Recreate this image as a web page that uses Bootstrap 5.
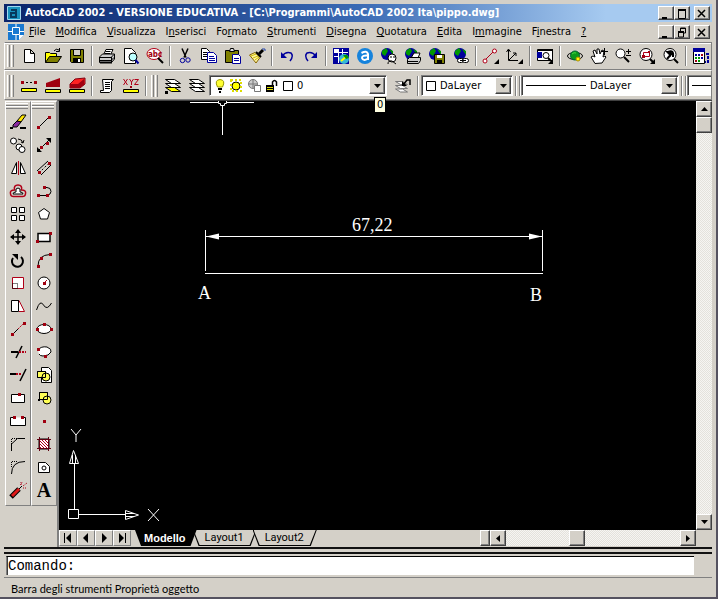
<!DOCTYPE html>
<html lang="it">
<head>
<meta charset="utf-8">
<meta name="viewport" content="width=device-width, initial-scale=1">
<title>AutoCAD 2002 - pippo.dwg</title>
<link href="https://cdn.jsdelivr.net/npm/bootstrap@5.3.0/dist/css/bootstrap.min.css" rel="stylesheet">
<style>
:root{--face:#d4d0c8;--shade:#808080;--ui:"DejaVu Sans Condensed","DejaVu Sans",sans-serif;--plain:Roboto,"Liberation Sans",Arial,sans-serif}
body{background:var(--face);font:11px/14px var(--ui);color:#000;padding:2px 4px 0 4px;border-right:2px solid #555260;border-bottom:2px solid #555260}
button,select,input{font:inherit;color:inherit;border-radius:0}
button{background:none;border:0;padding:0}
svg{display:block;flex:none}
.titlebar{height:18px;margin-top:2px;background:linear-gradient(90deg,#0a246a,#3a6ab4 50%,#a6caf0 85%);color:#fff;font-weight:700;padding:0 2px 0 3px}
.menubar{height:20px;padding:0 2px 0 4px}
.menu-items{gap:10px;padding-left:5px}
.menubar a{color:#000;text-decoration:none}
.raised{background:var(--face);border:1px solid;border-color:#fff #404040 #404040 #fff;box-shadow:inset -1px -1px 0 var(--shade)}
.winbtn{width:16px;height:14px}
.strip{border:1px solid;border-color:#fff var(--shade) var(--shade) #fff}
.strip-std{height:28px;border-top-color:var(--shade);box-shadow:inset 0 1px 0 #fff}
.strip-obj{height:30px;padding-top:1px}
.grip{width:8px;height:22px;margin:0 2px;flex:none;background:linear-gradient(90deg,#fff 0 1px,var(--face) 1px 2px,var(--shade) 2px 3px,var(--face) 3px 4px,#fff 4px 5px,var(--face) 5px 6px,var(--shade) 6px 7px,var(--face) 7px)}
.tool{width:24px;height:22px;flex:none;display:flex;align-items:center;justify-content:center}
.rule{width:2px;height:20px;margin:0 2px;flex:none;border-left:1px solid var(--shade);border-right:1px solid #fff}
.ic{width:18px;height:18px;fill:none;stroke:#000;stroke-width:1}
.fw{fill:#fff}.fk{fill:#000;stroke:none}.fy{fill:#ff0}.fo{fill:#808000}.fr{fill:#a00010;stroke:none}.fn{fill:#00009c;stroke:none}.fg{fill:#090;stroke:none}
.sr{stroke:#b00018}.sn{stroke:#00009c}.sg{stroke:#777}.b2{stroke-width:2}.no{stroke:none}
.combo{height:21px;background:#fff;border:1px solid;border-color:var(--shade) #fff #fff var(--shade);box-shadow:inset 1px 1px 0 #404040;padding:1px 1px 1px 4px}
.combo select{appearance:none;border:0;background:none;padding:0 0 0 4px;outline:0;min-width:0}
.arrowbtn{width:16px;height:17px;flex:none;display:flex;align-items:center;justify-content:center}
.combo-layer{width:178px;padding-left:1px}.combo-color{width:92px}.combo-ltype{width:158px}.combo-lw{width:27px}
.combo-layer,.combo-color,.combo-ltype,.combo-lw{flex-shrink:0}
.dock{width:53px;padding:1px 1px 0}
.palette{width:26px;border:1px solid;border-color:#fff var(--shade) var(--shade) #fff;padding-bottom:4px}
.palette .tool{height:23px;width:24px}
.mtext{font:700 20px/20px "Liberation Serif","Times New Roman",serif}
.vgrip{height:6px;width:22px;margin:1px 0;background:linear-gradient(#fff 0 1px,var(--face) 1px 2px,var(--shade) 2px 3px,#fff 3px 4px,var(--face) 4px 5px,var(--shade) 5px)}
.view{border-left:2px solid var(--shade);border-top:1px solid #404040}
.canvas{background:#000}
.canvas text{fill:#fff;font-family:"Liberation Serif","Times New Roman",serif;font-size:18px}
.track{background:#ecebe7 repeating-conic-gradient(#e4e2dc 0 25%,#f6f5f2 0 50%) 0 0/2px 2px}
.sbtn{width:16px;height:16px;flex:none;display:flex;align-items:center;justify-content:center}
.vbar{width:16px}
.tabrow{height:17px;font-family:var(--plain)}
.navbtn{width:18px;height:16px;border:1px solid;border-color:#fff var(--shade) var(--shade) #fff}
.sheet{height:16px;line-height:16px;padding:0 13px 0 12px;margin-left:-4px;position:relative;isolation:isolate}
.sheet,.sheet::before{clip-path:polygon(0 0,100% 0,calc(100% - 6px) 100%,6px 100%);background:#000}
.sheet::before{content:"";position:absolute;inset:0 1px 1px;z-index:-1;background:var(--face)}
.sheet.current{color:#fff;font-family:"Liberation Sans",Arial,sans-serif;font-weight:700;padding:0 11px 0 9px;margin-left:4px;z-index:1}
.sheet.current::before{background:#000}
.hbar{width:216px}
.hthumb{margin-left:29%}
.splitter{height:7px;border-top:2px solid #111;border-bottom:2px solid #111}
.prompt{height:19px;margin:2px 18px 2px 2px;border-left:1px solid var(--shade);border-top:1px solid #000;background:#fff;box-shadow:inset 1px 0 0 #404040;padding-left:1px}
.prompt label,.prompt input{font:14px/18px "Liberation Mono","Courier New",monospace}
.prompt input{border:0;outline:0;min-width:0;padding:0;background:none}
.status{height:20px;border-top:1px solid var(--shade);font:11px/20px Lato,"Liberation Sans",sans-serif;padding:1px 7px}
.tip{left:315px;top:-4px;background:#ffffe1;border:1px solid #000;padding:0 2px;line-height:14px}
</style>
<script src="https://cdn.jsdelivr.net/npm/bootstrap@5.3.0/dist/js/bootstrap.bundle.min.js"></script>
</head>
<body class="d-flex flex-column vh-100 overflow-hidden m-0">
<header class="titlebar d-flex align-items-center flex-shrink-0">
  <svg width="14" height="14" viewBox="0 0 14 14"><path fill="#1a93bd" stroke="#9fd8ee" d="M.5.5h13v13H.5z"/><path fill="none" stroke="#063a5c" stroke-width="2" d="M4 4h5v7H4V7h5"/></svg>
  <span class="ms-1 flex-grow-1 text-nowrap overflow-hidden">AutoCAD 2002 - VERSIONE EDUCATIVA - [C:\Programmi\AutoCAD 2002 Ita\pippo.dwg]</span>
  <button class="raised winbtn" aria-label="Riduci a icona"><svg width="12" height="11"><path d="M3 9h5v2H3z"/></svg></button>
  <button class="raised winbtn" aria-label="Ingrandisci"><svg width="13" height="11"><path fill="none" stroke="#000" d="M3.500 2v8.500h7V2M3 1.500h8M3 2.500h8"/></svg></button>
  <button class="raised winbtn ms-1" aria-label="Chiudi"><svg width="13" height="11"><path stroke="#000" stroke-width="1.500" d="M3 2l7 7M10 2l-7 7"/></svg></button>
</header>
<nav class="menubar d-flex align-items-center flex-shrink-0" aria-label="Menu">
  <svg width="16" height="16" viewBox="0 0 16 16"><path fill="#1878d0" d="M0 0h16v11l-5 5H0z"/><path fill="#fff" d="M11 16v-5h5z"/><path fill="none" stroke="#fff" d="M4.500 3.500h7v7h-7zM8 0v3M8 11v5M0 7.500h4M12 7.500h4"/></svg>
  <div class="d-flex flex-grow-1 menu-items"><a href="#"><u>F</u>ile</a><a href="#"><u>M</u>odifica</a><a href="#"><u>V</u>isualizza</a><a href="#">I<u>n</u>serisci</a><a href="#">Fo<u>r</u>mato</a><a href="#"><u>S</u>trumenti</a><a href="#"><u>D</u>isegna</a><a href="#"><u>Q</u>uotatura</a><a href="#"><u>E</u>dita</a><a href="#">I<u>m</u>magine</a><a href="#">F<u>i</u>nestra</a><a href="#"><u>?</u></a></div>
  <button class="raised winbtn" aria-label="Riduci disegno"><svg width="12" height="11"><path d="M3 9h5v2H3z"/></svg></button>
  <button class="raised winbtn" aria-label="Ripristina disegno"><svg width="13" height="11"><path fill="none" stroke="#000" d="M5.500 4V1h5v5H8M5 1.500h6M3.500 5v5h5V5M3 5.500h6M3 4.500h6"/></svg></button>
  <button class="raised winbtn ms-1" aria-label="Chiudi disegno"><svg width="13" height="11"><path stroke="#000" stroke-width="1.500" d="M3 2l7 7M10 2l-7 7"/></svg></button>
</nav>

<div class="strip strip-std d-flex align-items-center flex-shrink-0 overflow-hidden" role="toolbar" aria-label="Standard">
  <span class="grip"></span>
  <button class="tool" aria-label="Nuovo"><svg class="ic"><path class="fw" d="M4.500 2.500h6l4 4v9h-10zM10.500 2.500v4h4"/></svg></button>
  <button class="tool" aria-label="Apri"><svg class="ic"><path class="fy" d="M1.500 15.500v-10h4l1 1h6v3"/><path class="fo" d="M1.500 15.500l4-6h12l-4 6z"/><path d="M10 4q2-3 5-1M15.500 1v3.500H12"/></svg></button>
  <button class="tool" aria-label="Salva"><svg class="ic"><path class="fo" d="M2.500 2.500h13v13h-12l-1-1z"/><path fill="var(--face)" d="M5.500 2.500h7v6h-7z"/><path class="fk" d="M5 11h8v5H5z"/><path class="fw no" d="M10 12h2v3h-2z"/></svg></button>
  <span class="rule"></span>
  <button class="tool" aria-label="Stampa"><svg class="ic"><path class="fw" d="M5.500 8L8 2.500h7L12.500 8z"/><path fill="#ccc" d="M1.500 10l3-3h12v5l-3 3.500h-12z"/><path d="M2 10.500h11l3-3M2 13.500h11l3-3M13.500 10v5M7.500 4.500h5M7 6.500h5" /><path class="b2" d="M2 15.500h12"/></svg></button>
  <button class="tool" aria-label="Anteprima di stampa"><svg class="ic"><path class="fw" d="M2.500 1.500h7l4 4v11h-11z"/><circle cx="11" cy="10" r="4" fill="#bff"/><path class="sn b2" d="M13.500 13l3 3.500"/></svg></button>
  <button class="tool" aria-label="Trova e sostituisci"><svg class="ic"><ellipse cx="8" cy="7" rx="7" ry="5.500" class="fw sr"/><text x="2" y="10" font-size="8" font-weight="700" fill="#a00010" stroke="none">abc</text><path class="b2" d="M12 11l5 5"/></svg></button>
  <span class="rule"></span>
  <button class="tool" aria-label="Taglia"><svg class="ic"><path d="M6 1.500l4 9M12 1.500l-4 9" stroke-width="1.500"/><circle cx="6.500" cy="13.500" r="2.200" class="sn"/><circle cx="12" cy="13" r="2.200" class="sn"/></svg></button>
  <button class="tool" aria-label="Copia"><svg class="ic"><path class="fw" d="M1.500 1.500h5l3 3v8h-8z"/><path d="M3 5.500h4M3 7.500h4M3 9.500h4"/><path class="fw sn" d="M7.500 5.500h6l3 3v7h-9z"/><path class="sn" d="M9 9.500h5M9 11.500h6M9 13.500h6"/></svg></button>
  <button class="tool" aria-label="Incolla"><svg class="ic"><path class="fo" d="M1.500 3.500h13v12h-13z"/><path fill="#ddd" d="M5.500 4.500l1-3h3l1 3z"/><path class="fw sn" d="M8.500 7.500h6l2 2v7h-8z"/><path class="sn" d="M10 11.500h5M10 13.500h5"/></svg></button>
  <button class="tool" aria-label="Corrispondenza proprietà"><svg class="ic"><path fill="#fff3a0" stroke="#860" d="M1.500 8L7 5.500l5 5L8 16z"/><path stroke="#cb0" d="M3 9l5-2M5 11l5-2M7 13l4-3"/><path class="b2" d="M8 5l5 5"/><path stroke="#000" stroke-width="3" d="M11 7l4-4"/><path stroke="#24a" d="M14 2h3v2"/></svg></button>
  <span class="rule"></span>
  <button class="tool" aria-label="Annulla"><svg class="ic"><path class="sn" stroke-width="1.500" d="M4 9q4-5 9-3 3 3-1 8"/><path class="fn" d="M3 5v6h6z"/></svg></button>
  <button class="tool" aria-label="Ripeti"><svg class="ic"><path class="sn" stroke-width="1.500" d="M14 9Q10 4 5 6q-3 3 1 8"/><path class="fn" d="M15 5v6H9z"/></svg></button>
  <span class="rule"></span>
  <button class="tool" aria-label="Today"><svg class="ic"><path class="fn" d="M1 1h16v16H1z"/><path stroke="#fff" d="M2 5.500h14M6.500 2v14M2 9.500h5M10.500 2v6"/><path class="fw no" d="M2 2h4v4H2z"/><circle cx="12" cy="12" r="5" fill="#35b9d6" stroke="none"/><path stroke="#ff0" class="b2" d="M9 14l6-5"/><path class="fg" d="M11 8h4l2 3-3 1z"/></svg></button>
  <button class="tool" aria-label="Point A"><svg class="ic"><circle cx="9" cy="9" r="8" fill="#1683dc" stroke="none"/><path stroke="#fff" class="b2" d="M5.500 6Q11 3 12 7v6M12 8.500Q6 8 6 11q1 3.500 6 .5"/></svg></button>
  <button class="tool" aria-label="Meet Now"><svg class="ic"><circle cx="7" cy="7" r="6" class="fn"/><path class="fg" d="M2 4l4-3 2 3-3 5-3-2zM9 2l4 2v4z"/><circle cx="12" cy="11" r="4" class="fw"/><path d="M8 17q0-4 4-3l4 3M10 10h2M13 10h2"/></svg></button>
  <button class="tool" aria-label="Pubblica nel Web"><svg class="ic"><circle cx="7" cy="7" r="6" class="fn"/><path class="fg" d="M2 4l4-3 2 3-3 5-3-2zM9 2l4 2v4z"/><path class="fw" d="M7 11l3-5h6l-2 5z"/><path fill="#ccc" d="M3.500 12.500l2-2h11v3l-2 3h-11z"/><path d="M4 14.500h10"/></svg></button>
  <button class="tool" aria-label="eTransmit"><svg class="ic"><circle cx="7" cy="7" r="6" class="fn"/><path class="fg" d="M2 4l4-3 2 3-3 5-3-2zM9 2l4 2v4z"/><path class="fo" d="M6.500 7.500h10v9h-10z"/><path class="fw no" d="M9 8h5v3H9z"/><path class="fk" d="M9 13h5v3H9z"/></svg></button>
  <button class="tool" aria-label="Collegamento ipertestuale"><svg class="ic"><circle cx="8" cy="7" r="6" class="fn"/><path class="fg" d="M3 4l4-3 2 3-3 5-3-2zM10 2l4 2v4z"/><rect class="fw" x="5.500" y="11.500" width="6" height="4" rx="2"/><rect class="fw" x="10.500" y="11.500" width="6" height="4" rx="2"/><path d="M8 13.500h6"/></svg></button>
  <span class="rule"></span>
  <button class="tool" aria-label="Snap a oggetto"><svg class="ic"><path class="sr" d="M3 13L12 4"/><circle class="fw sr" cx="3" cy="14" r="2"/><circle class="fw sr" cx="12.500" cy="4" r="2"/><path class="fk" d="M17 12v5h-5z"/></svg></button>
  <button class="tool" aria-label="UCS"><svg class="ic"><path d="M2.500 3v10.500H12M3 13l7-7M.5 5l2-3 2 3M7 6h3v3"/><path class="fk" d="M17 12v5h-5z"/></svg></button>
  <span class="rule"></span>
  <button class="tool" aria-label="Viste con nome"><svg class="ic"><path class="fw" d="M1.500 2.500h15v11h-15z"/><path class="fn" d="M1 5h5v6H1z"/><path class="b2" d="M2 3h15"/><circle class="fw" cx="10" cy="8.500" r="3"/><path class="b2" d="M12 11l3 3"/><path class="fk" d="M17 12v5h-5z"/></svg></button>
  <span class="rule"></span>
  <button class="tool" aria-label="Orbita 3D"><svg class="ic"><ellipse cx="9" cy="9" rx="7.500" ry="3.500"/><circle cx="9" cy="8.500" r="4.500" fill="#0a9a1a" stroke="#063"/><path stroke="#4d4" d="M6 7q2-2 4-1"/><circle cx="12" cy="12" r="2" class="fy" stroke="#a80"/></svg></button>
  <button class="tool" aria-label="Pan in tempo reale"><svg class="ic"><path class="fw" d="M5 16.500L1 10l2-1 2 1-2-6 2-1 2 4 0-5h2l1 5 2-4 2 1-1 6 2-1 1 1-4 6z"/><path d="M14.500 1v7M11 4.500h7"/></svg></button>
  <button class="tool" aria-label="Zoom in tempo reale"><svg class="ic"><circle class="fw" cx="6.500" cy="6.500" r="4.500"/><path class="b2" d="M10 10l5 5"/><path d="M14.500 2v5M12 4.500h5M12 8.500h5"/></svg></button>
  <button class="tool" aria-label="Zoom finestra"><svg class="ic"><circle class="fw" cx="8" cy="7.500" r="6"/><path class="sr" d="M5.500 5.500h6v4h-6z"/><path class="fr" d="M4 8h3v3H4zM10 4h2v2h-2z"/><path class="b2" d="M12 12l3 3"/><path class="fk" d="M17 12v5h-5z"/></svg></button>
  <button class="tool" aria-label="Zoom precedente"><svg class="ic"><circle class="fw" cx="8" cy="7.500" r="6"/><path class="b2" d="M12 12l4 4M5 12l6-7M6 5q6-3 5 5"/><path class="fk" d="M3 4h6v6z"/></svg></button>
  <span class="rule"></span>
  <button class="tool" aria-label="AutoCAD DesignCenter"><svg class="ic"><path class="fw" d="M1.500 2.500h11v14h-11z"/><path class="fn" d="M1 1h12v4H1zM3 7h2v2H3zM6 7h2v2H6zM9 10h2v2H9z"/><path class="fr" d="M9 7h2v2H9zM3 13h2v2H3z"/><path class="fg" d="M3 10h2v2H3zM6 10h2v2H6zM6 13h2v2H6z"/><path class="sn b2" stroke-dasharray="3 1" d="M14 7h2v8h-3"/></svg></button>
</div>

<div class="strip strip-obj d-flex align-items-center flex-shrink-0 overflow-hidden" role="toolbar" aria-label="Proprietà oggetto">
  <span class="grip"></span>
  <button class="tool" aria-label="Distanza"><svg class="ic"><path stroke-dasharray="2 2" d="M2 5.500h14"/><path class="fr" d="M1 4h3v3H1zM14 4h3v3h-3z"/><path class="fy" d="M1.500 11.500h15v3h-15z"/></svg></button>
  <button class="tool" aria-label="Area"><svg class="ic"><path class="fr" d="M2 6l14-5v9H2z"/><path class="fy" d="M1.500 12.500h15v3h-15z"/></svg></button>
  <button class="tool" aria-label="Massa"><svg class="ic"><path fill="#f22" stroke="#800010" d="M2 7l5-5 10-1v6l-5 4H2z"/><path class="fr" d="M2 7h8l6-5v6l-5 3H2z"/><path class="fy" d="M1.500 12.500h15v3h-15z"/></svg></button>
  <span class="rule"></span>
  <button class="tool" aria-label="Lista"><svg class="ic"><path class="fw" d="M4.500 2.500h11l-2 2v9l-2 2h-9v-2h3z"/><path d="M7 5.500h5M7 7.500h5M7 9.500h5M7 11.500h5"/></svg></button>
  <button class="tool" aria-label="Individua punto"><svg class="ic"><path class="sr" d="M1.500 2l4 6M5.500 2l-4 6M7.500 2l2 3 2-3M9.500 5v3M12.500 2.500h4l-4 5h4"/><path class="fr" d="M8 9h2v2H8z"/><path class="fy" d="M1.500 12.500h15v3h-15z"/></svg></button>
  <span class="rule"></span>
  <span class="grip"></span>
  <button class="tool" aria-label="Rendi corrente il layer"><svg class="ic"><path class="fw" d="M1.500 2.500h9l6 4h-9zM1.500 6.500h9l6 4h-9z"/><path class="fy" d="M1.500 10.500h9l6 4h-9z"/><path class="fk" d="M1 14h3v3H1z"/></svg></button>
  <button class="tool" aria-label="Layer"><svg class="ic"><path class="fw" d="M1.500 10.500h9l6 4h-9zM1.500 6.500h9l6 4h-9zM1.500 2.500h9l6 4h-9z"/></svg></button>
  <div class="combo combo-layer d-flex align-items-center">
    <svg class="ic"><path fill="#ff3" stroke="#990" d="M6.500 10Q3 3 9 2.500 15 3 11.500 10z"/><path class="b2" d="M7 12h4M8 15h2"/></svg><svg class="ic" width="16" height="18"><circle cx="7" cy="9" r="4" class="fy"/><path stroke="#dd0" class="b2" stroke-dasharray="2 2" d="M2 3h10v11H2z"/></svg><svg class="ic"><circle cx="6" cy="7" r="4.500" fill="#ccc" class="sg"/><path class="sg fw" d="M7.500 8.500h6v6h-6z"/><path class="sg" d="M6 3v8M2 7h8"/></svg><svg class="ic"><path class="fk" d="M1 8h8v7H1z"/><path stroke="#dd0" d="M2 10.500h6M2 12.500h6"/><path stroke-width="1.500" d="M7.500 8V5q2-3 4 0v4"/></svg>
    <svg width="10" height="10"><path fill="#fff" stroke="#000" d="M.5.500h9v9h-9z"/></svg>
    <select class="flex-grow-1" aria-label="Layer corrente"><option>0</option></select><span class="raised arrowbtn"><svg width="7" height="4"><path d="M0 0h7L3.500 4z"/></svg></span>
  </div>
  <span class="ps-1 flex-shrink-0"></span>
  <button class="tool" aria-label="Layer precedente"><svg class="ic"><path class="fw sg" d="M1.500 4.500h7l5 3h-7zM1.500 8.500h7l5 3h-7zM1.500 12h7l5 3h-7z"/><path stroke-width="1.500" d="M9 8l4-5h3v5"/><path class="fk" d="M8 4v5h5z"/></svg></button>
  <span class="rule"></span>
  <div class="combo combo-color d-flex align-items-center">
    <svg width="10" height="10"><path fill="#fff" stroke="#000" d="M.5.500h9v9h-9z"/></svg>
    <select class="flex-grow-1" aria-label="Colore"><option>DaLayer</option></select><span class="raised arrowbtn"><svg width="7" height="4"><path d="M0 0h7L3.500 4z"/></svg></span>
  </div>
  <span class="rule"></span><span class="rule mx-0"></span>
  <div class="combo combo-ltype d-flex align-items-center">
    <svg width="60" height="2"><path d="M0 0h60v1H0z"/></svg>
    <select class="flex-grow-1" aria-label="Tipo di linea"><option>DaLayer</option></select><span class="raised arrowbtn"><svg width="7" height="4"><path d="M0 0h7L3.500 4z"/></svg></span>
  </div>
  <span class="rule"></span><span class="rule mx-0"></span>
  <div class="combo combo-lw flex-grow-1 d-flex align-items-center"><svg width="60" height="2"><path d="M0 0h60v1H0z"/></svg></div>
</div>

<main class="d-flex flex-grow-1">
  <div class="dock d-flex align-items-start flex-shrink-0">
    <div class="palette" role="toolbar" aria-label="Edita">
      <div class="vgrip"></div>
      <button class="tool" aria-label="Cancella"><svg class="ic"><path fill="#ffe600" d="M8 8l5-6h4l-5 7z"/><path fill="#8a2aa0" d="M4 12l4-4 4 1-4 5H4z"/><path class="b2" d="M1 15h3M11 15h6"/></svg></button>
      <button class="tool" aria-label="Copia oggetto"><svg class="ic"><circle class="fw" cx="4.500" cy="5" r="3"/><circle class="fw" cx="10" cy="11" r="3"/><circle class="fw" cx="13" cy="13.500" r="3"/><path d="M9 3q4 0 5 4M12 6l2 1 1-3"/></svg></button>
      <button class="tool" aria-label="Specchio"><svg class="ic"><path class="fw" d="M7.500 3.500v11h-5zM11.500 3.500v11h5z"/><path class="sr" d="M9.500 2v14"/></svg></button>
      <button class="tool" aria-label="Offset"><svg class="ic"><path class="sr" stroke-width="1.500" d="M1.500 12q-1-4 4-4-1-5 3.500-5 4.500 0 3.500 5 5 0 4 4-.5 3-4 2.500h-7q-3.500 .5-4-2.500z"/><path class="fw" d="M4 12q0-2 3-2V7q2-2 4 0v3q3 0 3 2z"/></svg></button>
      <button class="tool" aria-label="Serie"><svg class="ic"><path class="fw" d="M2.500 2.500h5v5h-5zM10.500 2.500h5v5h-5zM2.500 10.500h5v5h-5zM10.500 10.500h5v5h-5z"/></svg></button>
      <button class="tool" aria-label="Sposta"><svg class="ic"><path d="M9 2v14M2 9h14" stroke-width="1.500"/><path class="fk" d="M9 1l3 4H6zM9 17l3-4H6zM1 9l4-3v6zM17 9l-4-3v6z"/></svg></button>
      <button class="tool" aria-label="Ruota"><svg class="ic"><path class="b2" d="M4 7a5.500 5.500 0 1 0 8-1"/><path class="fk" d="M3 3h6v6z"/></svg></button>
      <button class="tool" aria-label="Scala"><svg class="ic"><path class="fw sr" d="M3.500 3.500h11v11h-11z"/><path stroke-dasharray="1 1" d="M3.500 9.500h5v5h-5z"/></svg></button>
      <button class="tool" aria-label="Stira"><svg class="ic"><path class="fw" d="M2.500 3.500h7v11h-7z"/><path class="fw sr" d="M10 3.500l5.500 11H10"/><path stroke-dasharray="2 1" d="M9.500 3v12"/></svg></button>
      <button class="tool" aria-label="Allunga"><svg class="ic"><path d="M4 14l5-5"/><path class="sr" stroke-dasharray="2 1" d="M9 9l5-5"/><path class="fr" d="M2 13h3v3H2zM14 2h3v3h-3z"/></svg></button>
      <button class="tool" aria-label="Taglia oggetto"><svg class="ic"><path d="M7 15l6-12" stroke-width="1.500"/><path class="b2" d="M2 9h7"/><path class="sr b2" stroke-dasharray="2 1" d="M10 9h7"/></svg></button>
      <button class="tool" aria-label="Estendi"><svg class="ic"><path d="M11 15l6-12" stroke-width="1.500"/><path class="b2" d="M1 8h6"/><path class="sr b2" stroke-dasharray="2 1" d="M7 8h6"/></svg></button>
      <button class="tool" aria-label="Spezza nel punto"><svg class="ic"><path class="fw" d="M2.500 5.500h13v8h-13z"/><path class="fr" d="M9 4h3v3H9z"/></svg></button>
      <button class="tool" aria-label="Spezza"><svg class="ic"><path class="fw" d="M5 5.500H1.500v8h15v-8H13"/><path class="fr" d="M4 4h3v3H4zM12 4h3v3h-3z"/></svg></button>
      <button class="tool" aria-label="Cima"><svg class="ic"><path stroke-dasharray="1 1" d="M2.500 9V3.500H9"/><path d="M2.500 16V9l6-5.500H16"/></svg></button>
      <button class="tool" aria-label="Raccordo"><svg class="ic"><path stroke-dasharray="1 1" d="M2.500 9V3.500H9"/><path d="M2.500 16q0-12.500 13.500-12.500"/></svg></button>
      <button class="tool" aria-label="Esplodi"><svg class="ic"><path stroke-width="5" d="M2 16l8-8"/><path stroke="#e01818" stroke-width="3" d="M3 15l7-7"/><path d="M10 8l3-3"/><path class="sr" stroke-dasharray="1 1" d="M11 4l3-3M14 5l4-3M14 7h4M12 1v3"/></svg></button>
    </div>
    <div class="palette" role="toolbar" aria-label="Disegna">
      <div class="vgrip"></div>
      <button class="tool" aria-label="Linea"><svg class="ic"><path d="M4 14L14 4"/><path class="fr" d="M2 13h3v3H2zM13 3h3v3h-3z"/></svg></button>
      <button class="tool" aria-label="Linea di costruzione"><svg class="ic"><path d="M3 15L15 3"/><path class="fk" d="M2 16v-5l5 5zM16 2v5l-5-5z"/><path class="fr" d="M5 10h3v3H5zM11 6h3v3h-3z"/></svg></button>
      <button class="tool" aria-label="Multilinea"><svg class="ic"><path d="M2 12L13 2M6 16L16 6"/><path stroke-dasharray="2 2" d="M4 14L14 4"/><path class="fr" d="M3 12h3v3H3zM13 3h3v3h-3z"/></svg></button>
      <button class="tool" aria-label="Polilinea"><svg class="ic"><path d="M3 13.500h9q4-1 4-4 0-4-4-4H9"/><path class="fr" d="M2 12h3v3H2zM11 12h3v3h-3zM8 4h3v3H8z"/></svg></button>
      <button class="tool" aria-label="Poligono"><svg class="ic"><path class="fw" d="M9 3.500l5.500 4-2 6.500h-7l-2-6.500z"/></svg></button>
      <button class="tool" aria-label="Rettangolo"><svg class="ic"><path class="fw" stroke-width="1.500" d="M3 5.500h12v8H3z"/><path class="fr" d="M1 12h3v3H1zM14 4h3v3h-3z"/></svg></button>
      <button class="tool" aria-label="Arco"><svg class="ic"><path d="M3 15Q3 4 15 3.500"/><path class="fr" d="M2 14h3v3H2zM5 6h3v3H5zM14 2h3v3h-3z"/></svg></button>
      <button class="tool" aria-label="Cerchio"><svg class="ic"><circle class="fw" cx="9" cy="9" r="6"/><path class="sr" d="M8 10l4-4"/><path class="fr" d="M8 8h3v3H8z"/></svg></button>
      <button class="tool" aria-label="Spline"><svg class="ic"><path d="M1.500 13Q5 2 8.500 8t8-2"/></svg></button>
      <button class="tool" aria-label="Ellisse"><svg class="ic"><ellipse class="fw" cx="9" cy="9" rx="7" ry="4.500"/><path class="fr" d="M1 8h3v3H1zM8 3h3v3H8zM15 8h3v3h-3z"/></svg></button>
      <button class="tool" aria-label="Arco di ellisse"><svg class="ic"><path class="fw" d="M3 7q3-4 9-3 5 2 4 5-2 4-8 4-3 0-4-2"/><path class="fr" d="M2 5h3v3H2zM9 12h3v3H9z"/></svg></button>
      <button class="tool" aria-label="Inserisci blocco"><svg class="ic"><path class="fw" d="M6.500 1.500h7l3 3v12h-10z"/><path fill="#ff5" d="M2.500 5.500h8v6h-8z"/><circle cx="11" cy="11" r="4" fill="#ff5"/><path d="M2.500 5.500h8v6h-8z"/></svg></button>
      <button class="tool" aria-label="Crea blocco"><svg class="ic"><path fill="#ff5" d="M4.500 3.500h8v7h-8z"/><circle cx="12" cy="11" r="4" fill="#ff5"/><path d="M4.500 3.500h8v7h-8z"/><path class="fk" d="M3 10h2v2H3z"/></svg></button>
      <button class="tool" aria-label="Punto"><svg class="ic"><path class="fr" d="M8 8h3v3H8z"/></svg></button>
      <button class="tool" aria-label="Tratteggio"><svg class="ic"><path class="fw" d="M4 4h10v10H4z"/><path class="sr" d="M4 11l3 3M4 8l6 6M4 5l9 9M6 4l8 8M9 4l5 5M12 4l2 2"/><path d="M4.500 2v14M13.500 2v14M2 4.500h14M2 13.500h14" stroke="#600010"/></svg></button>
      <button class="tool" aria-label="Regione"><svg class="ic"><path class="fw" d="M3.500 4.500h7l4 4v6h-11z"/><circle cx="9" cy="10" r="2"/></svg></button>
      <button class="tool mtext" aria-label="Testo multilinea">A</button>
    </div>
  </div>

  <section class="view d-flex flex-column flex-grow-1">
    <div class="d-flex flex-grow-1">
      <div class="canvas position-relative flex-grow-1">
        <svg class="position-absolute w-100 h-100" role="img" aria-label="Disegno: segmento A-B quotato 67,22">
          <g stroke="#fff" fill="none">
            <path d="M131 1.500h28M167 1.500h28M163.500 5v29M159.500 0v2.500h2v2h4v-2h2V0"/>
            <path d="M146.500 129v41M483.500 129v41M146 172.500h338M147 135.500h336"/>
            <path fill="#fff" stroke="none" d="M147 135.500l13-3v6zM483 135.500l-13-3v6z"/>
            <path d="M9.500 408.500h10v9h-10zM20 413.500h46M15.500 408V362"/>
            <path d="M66.500 409.500v9l13-4.500zM67 412.500h8M67 415.500h8M10.500 362.500h9l-5-13zM13.500 362v-8M16.500 362v-8"/>
            <path d="M12 328l5 6 5-6M17 334v7M89 408l11 12M100 408l-11 12"/>
          </g>
          <text x="293" y="130">67,22</text><text x="139" y="198">A</text><text x="471" y="200">B</text>
        </svg>
        <div class="tip position-absolute" role="tooltip">0</div>
      </div>
      <div class="vbar track d-flex flex-column flex-shrink-0">
        <button class="raised sbtn" aria-label="Scorri su"><svg width="7" height="4"><path d="M0 4h7L3.500 0z"/></svg></button>
        <span class="raised sbtn"></span>
        <button class="raised sbtn mt-auto" aria-label="Scorri giù"><svg width="7" height="4"><path d="M0 0h7L3.500 4z"/></svg></button>
      </div>
    </div>
    <div class="tabrow d-flex align-items-start flex-shrink-0">
      <button class="navbtn" aria-label="Prima scheda"><svg width="16" height="14"><path d="M4 2h1v10H4zM11 2v10L6 7z"/></svg></button>
      <button class="navbtn" aria-label="Scheda precedente"><svg width="16" height="14"><path d="M10 2v10L5 7z"/></svg></button>
      <button class="navbtn" aria-label="Scheda successiva"><svg width="16" height="14"><path d="M6 2v10l5-5z"/></svg></button>
      <button class="navbtn" aria-label="Ultima scheda"><svg width="16" height="14"><path d="M5 2v10l5-5zM11 2h1v10h-1z"/></svg></button>
      <button class="sheet current">Modello</button><button class="sheet">Layout1</button><button class="sheet">Layout2</button>
      <div class="hbar d-flex track ms-auto">
        <span class="raised px-1"></span>
        <button class="raised sbtn" aria-label="Scorri a sinistra"><svg width="4" height="7"><path d="M4 0v7L0 3.500z"/></svg></button>
        <span class="raised sbtn hthumb"></span>
        <button class="raised sbtn ms-auto" aria-label="Scorri a destra"><svg width="4" height="7"><path d="M0 0v7l4-3.500z"/></svg></button>
      </div>
      <span class="vbar flex-shrink-0"></span>
    </div>
  </section>
</main>
<div class="splitter flex-shrink-0"></div>
<div class="prompt d-flex flex-shrink-0"><label for="cmd">Comando:</label><input id="cmd" class="flex-grow-1" type="text"></div>
<footer class="status flex-shrink-0">Barra degli strumenti Proprietà oggetto</footer>
</body>
</html>
